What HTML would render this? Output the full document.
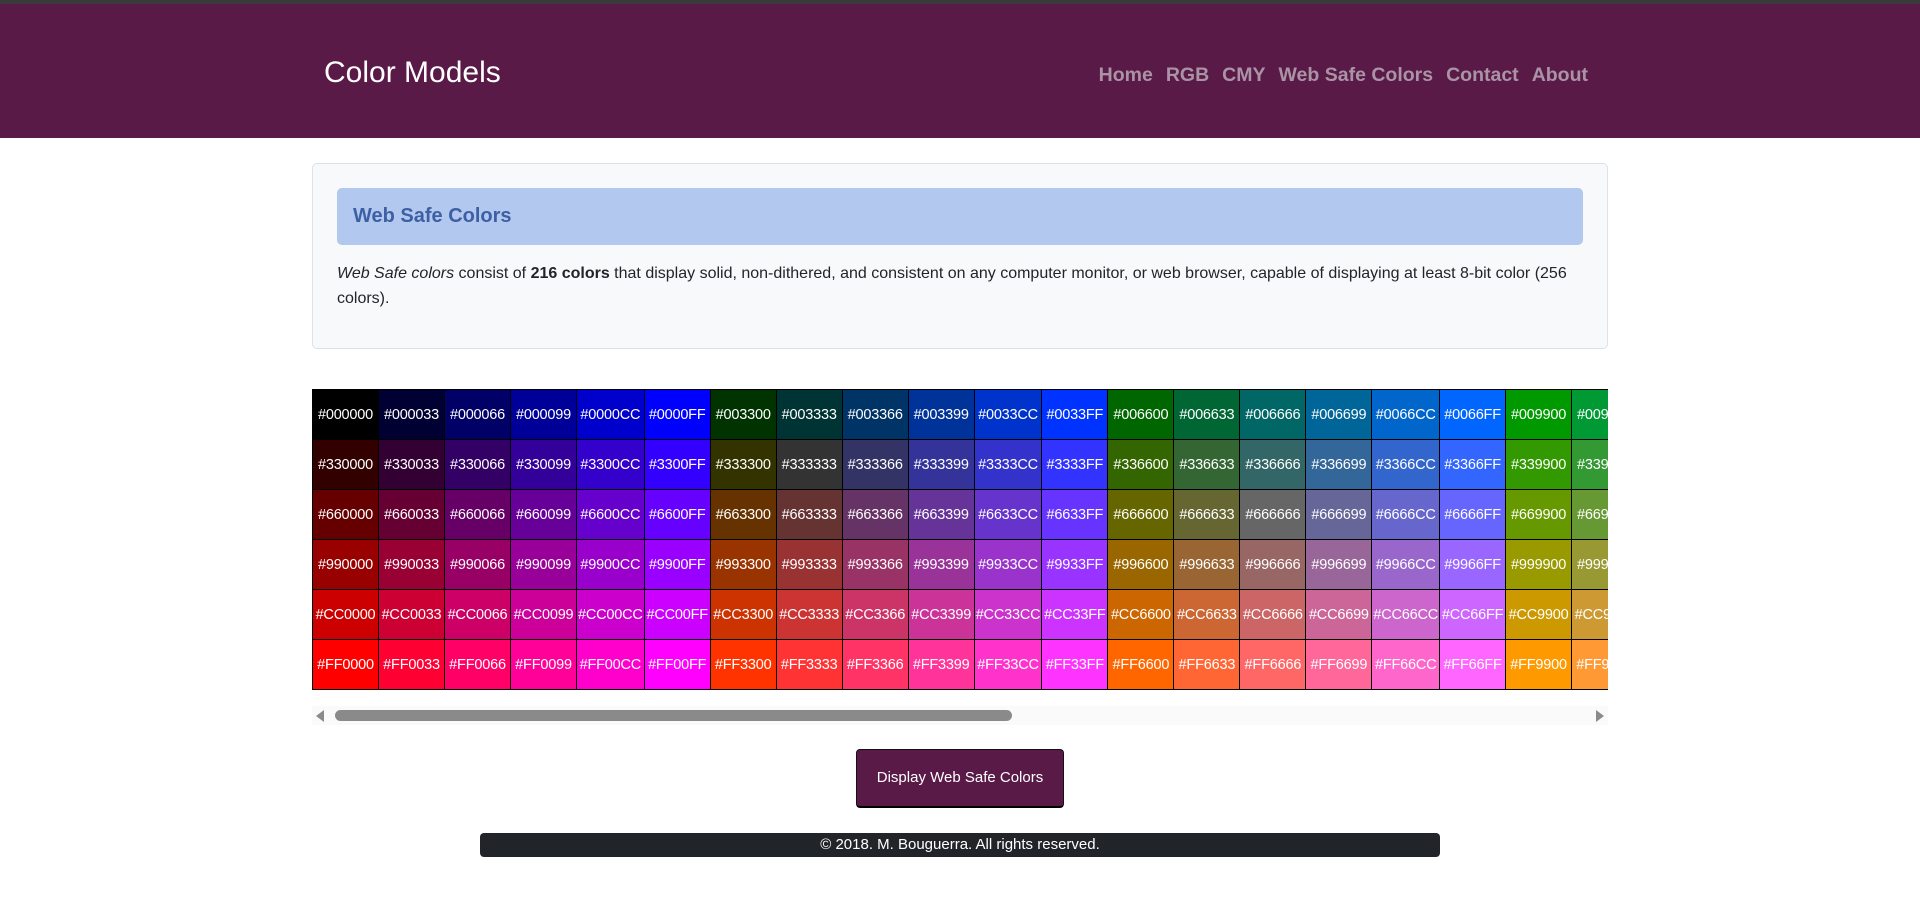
<!DOCTYPE html>
<html><head><meta charset="utf-8"><style>
*{box-sizing:border-box;margin:0;padding:0}
body{width:1920px;height:910px;overflow:hidden;background:#fff;font-family:"Liberation Sans",sans-serif;color:#212529}
.top{height:4px;background:#3a3a3a}
nav{height:134px;background:#5a1a47;position:relative}
.brand{position:absolute;left:324px;top:52px;font-size:30px;color:#fff}
.links{position:absolute;right:332px;top:60px;font-size:19.5px;font-weight:bold;color:#ab93a6}
.links span{margin-left:13px}
.card{position:absolute;left:312px;top:163px;width:1296px;height:186px;background:#f8f9fa;border:1px solid #dee2e6;border-radius:5px}
.alert{position:absolute;left:24px;top:24px;width:1246px;height:57px;background:#b3c8ef;border-radius:5px;color:#3d5fa3;font-size:20px;font-weight:bold;padding:17px 16px}
.card p{position:absolute;left:24px;top:97px;width:1250px;font-size:16px;line-height:25px}
.wrap{position:absolute;left:312px;top:389px;width:1296px;height:301px;overflow:hidden}
table{border-collapse:collapse;width:max-content;table-layout:auto}
td{border:1px solid #000;height:50px;min-width:66px;padding:0 1px;color:#fff;font-size:14.5px;white-space:nowrap;letter-spacing:-0.2px;text-align:center}
.sb{position:absolute;left:312px;top:706px;width:1296px;height:19px;background:#fafafa}
.thumb{position:absolute;left:23px;top:4px;width:677px;height:11px;background:#8a8a8a;border-radius:6px}
.al{position:absolute;left:4px;top:4px;width:0;height:0;border-top:6px solid transparent;border-bottom:6px solid transparent;border-right:8px solid #8a8a8a}
.ar{position:absolute;right:4px;top:4px;width:0;height:0;border-top:6px solid transparent;border-bottom:6px solid transparent;border-left:8px solid #8a8a8a}
.btn{position:absolute;left:856px;top:749px;width:208px;height:59px;background:#5a1a47;border:1px solid #111;border-bottom:2px solid #000;border-radius:4px;color:#fff;font-size:15px;text-align:center;line-height:56px}
footer{position:absolute;left:480px;top:833px;width:960px;height:24px;background:#212529;border-radius:4px;color:#fff;font-size:15px;text-align:center;line-height:24px}
</style></head><body>
<div class="top"></div>
<nav><div class="brand">Color Models</div>
<div class="links"><span>Home</span><span>RGB</span><span>CMY</span><span>Web Safe Colors</span><span>Contact</span><span>About</span></div></nav>
<div class="card"><div class="alert">Web Safe Colors</div>
<p><i>Web Safe colors</i> consist of <b>216 colors</b> that display solid, non-dithered, and consistent on any computer monitor, or web browser, capable of displaying at least 8-bit color (256 colors).</p></div>
<div class="wrap"><table>
<tr><td style="background:#000000">#000000</td><td style="background:#000033">#000033</td><td style="background:#000066">#000066</td><td style="background:#000099">#000099</td><td style="background:#0000CC">#0000CC</td><td style="background:#0000FF">#0000FF</td><td style="background:#003300">#003300</td><td style="background:#003333">#003333</td><td style="background:#003366">#003366</td><td style="background:#003399">#003399</td><td style="background:#0033CC">#0033CC</td><td style="background:#0033FF">#0033FF</td><td style="background:#006600">#006600</td><td style="background:#006633">#006633</td><td style="background:#006666">#006666</td><td style="background:#006699">#006699</td><td style="background:#0066CC">#0066CC</td><td style="background:#0066FF">#0066FF</td><td style="background:#009900">#009900</td><td style="background:#009933">#009933</td><td style="background:#009966">#009966</td><td style="background:#009999">#009999</td></tr>
<tr><td style="background:#330000">#330000</td><td style="background:#330033">#330033</td><td style="background:#330066">#330066</td><td style="background:#330099">#330099</td><td style="background:#3300CC">#3300CC</td><td style="background:#3300FF">#3300FF</td><td style="background:#333300">#333300</td><td style="background:#333333">#333333</td><td style="background:#333366">#333366</td><td style="background:#333399">#333399</td><td style="background:#3333CC">#3333CC</td><td style="background:#3333FF">#3333FF</td><td style="background:#336600">#336600</td><td style="background:#336633">#336633</td><td style="background:#336666">#336666</td><td style="background:#336699">#336699</td><td style="background:#3366CC">#3366CC</td><td style="background:#3366FF">#3366FF</td><td style="background:#339900">#339900</td><td style="background:#339933">#339933</td><td style="background:#339966">#339966</td><td style="background:#339999">#339999</td></tr>
<tr><td style="background:#660000">#660000</td><td style="background:#660033">#660033</td><td style="background:#660066">#660066</td><td style="background:#660099">#660099</td><td style="background:#6600CC">#6600CC</td><td style="background:#6600FF">#6600FF</td><td style="background:#663300">#663300</td><td style="background:#663333">#663333</td><td style="background:#663366">#663366</td><td style="background:#663399">#663399</td><td style="background:#6633CC">#6633CC</td><td style="background:#6633FF">#6633FF</td><td style="background:#666600">#666600</td><td style="background:#666633">#666633</td><td style="background:#666666">#666666</td><td style="background:#666699">#666699</td><td style="background:#6666CC">#6666CC</td><td style="background:#6666FF">#6666FF</td><td style="background:#669900">#669900</td><td style="background:#669933">#669933</td><td style="background:#669966">#669966</td><td style="background:#669999">#669999</td></tr>
<tr><td style="background:#990000">#990000</td><td style="background:#990033">#990033</td><td style="background:#990066">#990066</td><td style="background:#990099">#990099</td><td style="background:#9900CC">#9900CC</td><td style="background:#9900FF">#9900FF</td><td style="background:#993300">#993300</td><td style="background:#993333">#993333</td><td style="background:#993366">#993366</td><td style="background:#993399">#993399</td><td style="background:#9933CC">#9933CC</td><td style="background:#9933FF">#9933FF</td><td style="background:#996600">#996600</td><td style="background:#996633">#996633</td><td style="background:#996666">#996666</td><td style="background:#996699">#996699</td><td style="background:#9966CC">#9966CC</td><td style="background:#9966FF">#9966FF</td><td style="background:#999900">#999900</td><td style="background:#999933">#999933</td><td style="background:#999966">#999966</td><td style="background:#999999">#999999</td></tr>
<tr><td style="background:#CC0000">#CC0000</td><td style="background:#CC0033">#CC0033</td><td style="background:#CC0066">#CC0066</td><td style="background:#CC0099">#CC0099</td><td style="background:#CC00CC">#CC00CC</td><td style="background:#CC00FF">#CC00FF</td><td style="background:#CC3300">#CC3300</td><td style="background:#CC3333">#CC3333</td><td style="background:#CC3366">#CC3366</td><td style="background:#CC3399">#CC3399</td><td style="background:#CC33CC">#CC33CC</td><td style="background:#CC33FF">#CC33FF</td><td style="background:#CC6600">#CC6600</td><td style="background:#CC6633">#CC6633</td><td style="background:#CC6666">#CC6666</td><td style="background:#CC6699">#CC6699</td><td style="background:#CC66CC">#CC66CC</td><td style="background:#CC66FF">#CC66FF</td><td style="background:#CC9900">#CC9900</td><td style="background:#CC9933">#CC9933</td><td style="background:#CC9966">#CC9966</td><td style="background:#CC9999">#CC9999</td></tr>
<tr><td style="background:#FF0000">#FF0000</td><td style="background:#FF0033">#FF0033</td><td style="background:#FF0066">#FF0066</td><td style="background:#FF0099">#FF0099</td><td style="background:#FF00CC">#FF00CC</td><td style="background:#FF00FF">#FF00FF</td><td style="background:#FF3300">#FF3300</td><td style="background:#FF3333">#FF3333</td><td style="background:#FF3366">#FF3366</td><td style="background:#FF3399">#FF3399</td><td style="background:#FF33CC">#FF33CC</td><td style="background:#FF33FF">#FF33FF</td><td style="background:#FF6600">#FF6600</td><td style="background:#FF6633">#FF6633</td><td style="background:#FF6666">#FF6666</td><td style="background:#FF6699">#FF6699</td><td style="background:#FF66CC">#FF66CC</td><td style="background:#FF66FF">#FF66FF</td><td style="background:#FF9900">#FF9900</td><td style="background:#FF9933">#FF9933</td><td style="background:#FF9966">#FF9966</td><td style="background:#FF9999">#FF9999</td></tr>
</table></div>
<div class="sb"><div class="al"></div><div class="thumb"></div><div class="ar"></div></div>
<div class="btn">Display Web Safe Colors</div>
<footer>© 2018. M. Bouguerra. All rights reserved.</footer>
</body></html>
